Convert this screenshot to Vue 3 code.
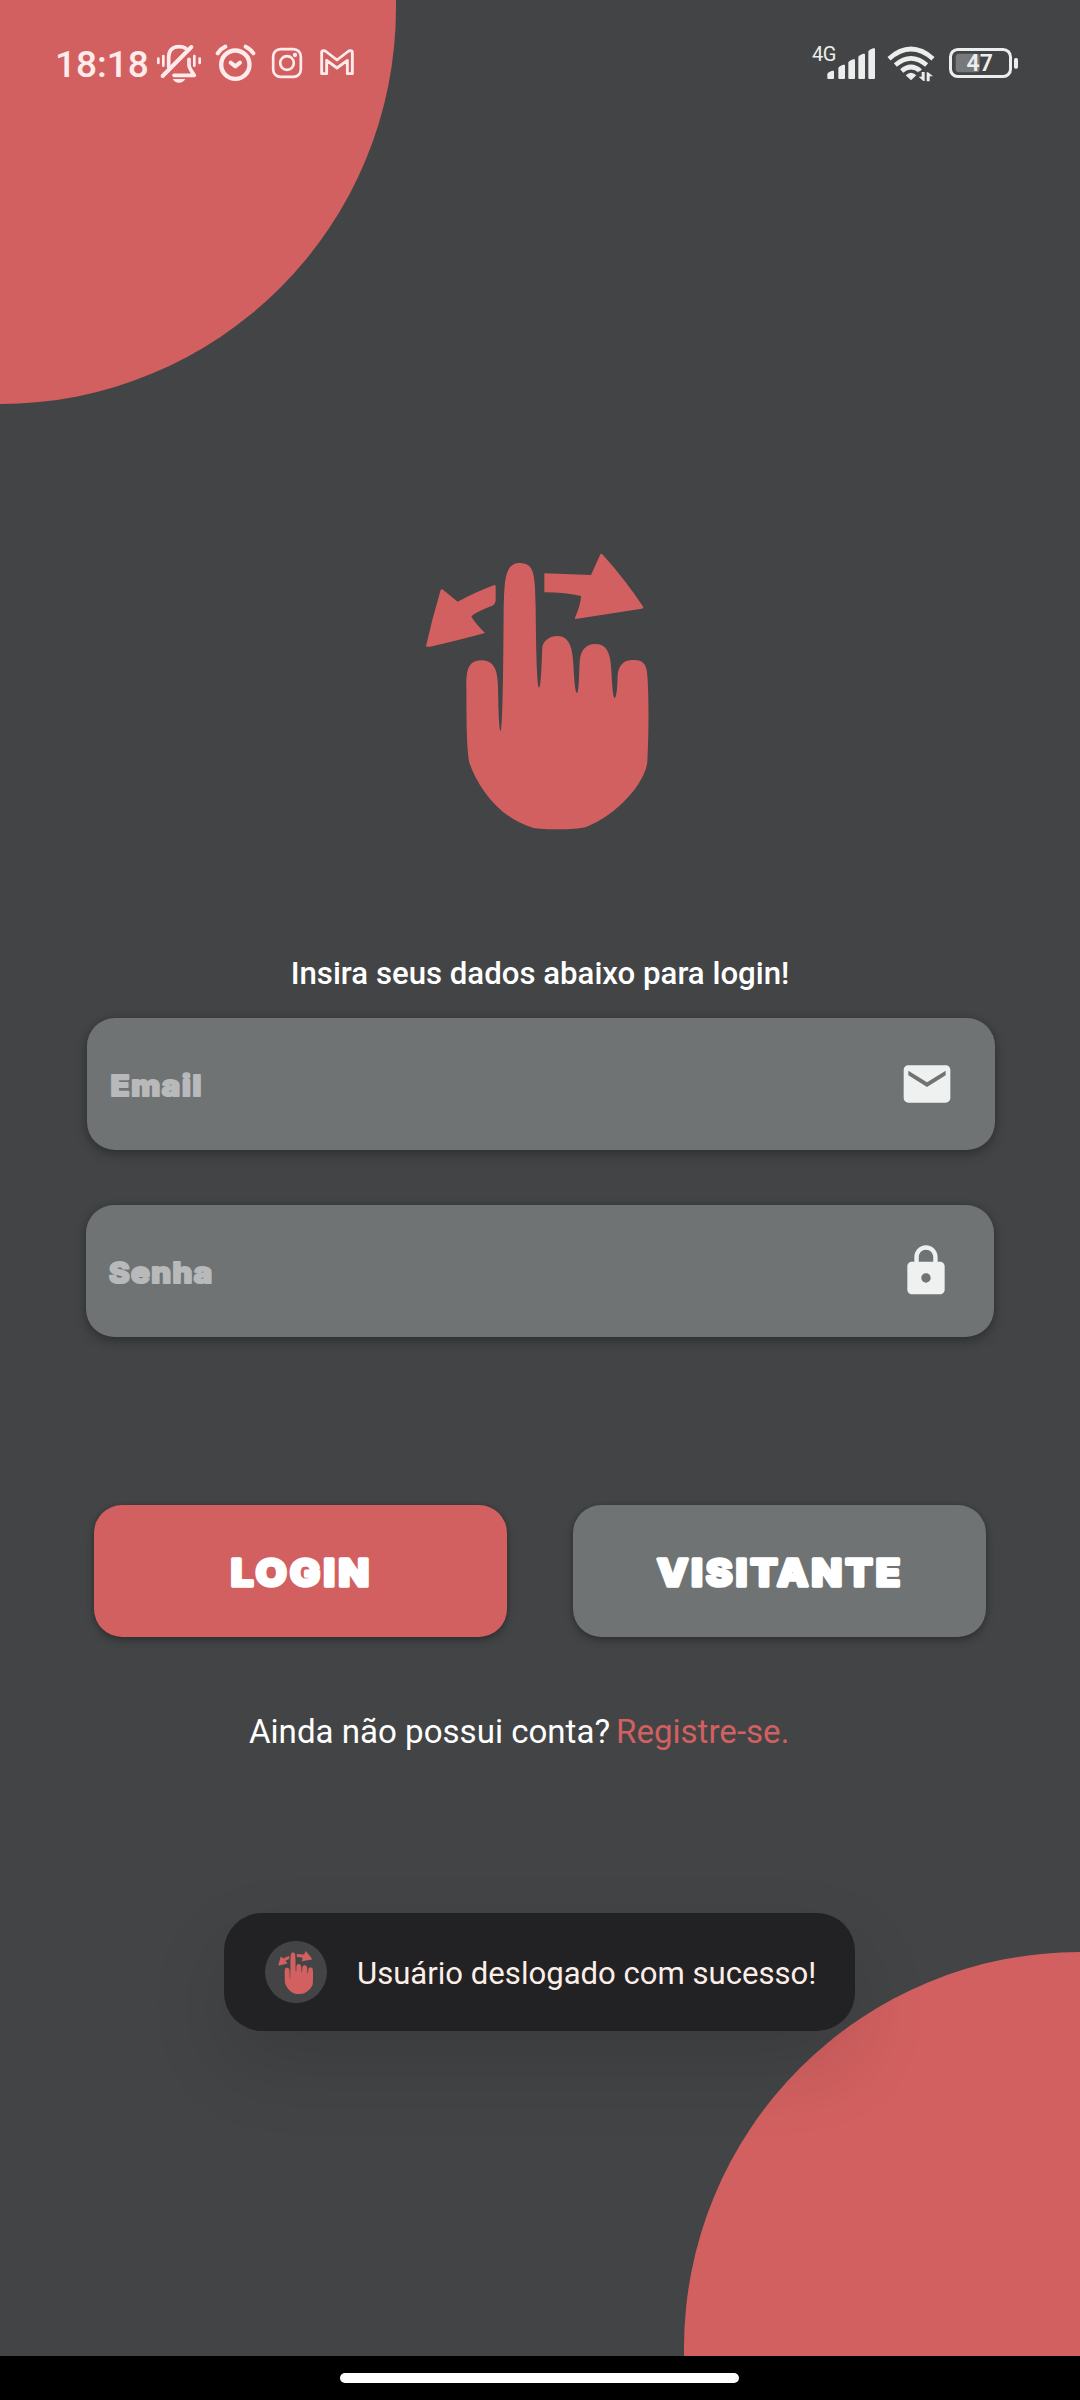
<script setup>
const hand =
  'M169 440C169 395 172 361 215 361C259 361 263 405 264 440C265 500 267 572 272 573C278 570 280 400 281 210C283 120 284 69 330 69C375 69 375 110 377 200C378 330 381 440 387 443C393 440 394 390 397 322C399 302 420 288 442 288C479 288 487 325 490 370C492 410 495 458 501 459C507 456 507 405 509 365C511 335 524 312 557 312C595 312 602 350 604 390C606 430 609 474 614 474C620 472 622 440 623 405C626 372 645 360 668 360C706 360 711 377 713 420C716 480 717 560 712 665C706 730 620 825 530 860C495 870 410 870 368 863C270 835 205 745 178 668C168 610 170 510 169 440Z'
const arrowLeft =
  'M48 319Q66 237 92 150Q95 146 99 149L143 185Q205 152 254 135Q257 135 257 140V182Q256 192 247 197C215 210 190 220 184 230Q198 252 225 279Q140 302 66 319Q52 322 48 319Z'
const arrowRight =
  'M403 100L543 105L571 43Q574 39 579 45Q645 118 700 201Q701 205 695 206L497 237Q493 237 495 233Q513 192 513 168Q470 158 403 157Z'
const bars = [
  [112, 122],
  [145, 104],
  [175, 88],
  [205, 71],
  [235, 55],
]
</script>

<template>
  <div class="screen">
    <div class="blob top"></div>
    <div class="blob bottom"></div>

    <header class="status">
      <span class="time">18:18</span>
      <svg class="bell" viewBox="351 42 135 117" width="45" height="39">
        <g fill="none" stroke="#ffebeb" stroke-linecap="round" stroke-linejoin="round">
          <path stroke-width="11" d="M386 110V82C386 59 400 50 417 50Q429 50 437 55M447 88V106Q447 114 463 136H402" />
          <path stroke-width="12" d="M368 138L454 51" />
          <path stroke-width="8" d="M355 86V99M370 78V107M463 78V107M479 86V99" />
        </g>
        <path fill="#ffebeb" d="M398 147H436Q430 158 417 158Q404 158 398 147Z" />
      </svg>
      <svg class="alarm" viewBox="525 42 123 117" width="41" height="39">
        <g fill="none" stroke="#ffebeb" stroke-linecap="round" stroke-linejoin="round">
          <circle cx="586" cy="104" r="42.5" stroke-width="13" />
          <path stroke-width="12" d="M533 70Q541 57 556 50M617 50Q633 58 640 70" />
          <path stroke-width="12" d="M572 98L586 109L600 98" />
        </g>
      </svg>
      <svg class="insta" viewBox="693 42 96 117" width="32" height="39">
        <g fill="none" stroke="#ffebeb" stroke-width="8">
          <rect x="699.5" y="57.5" width="83" height="83" rx="22" />
          <circle cx="741" cy="99" r="20.5" />
        </g>
        <circle cx="765" cy="75" r="6.5" fill="#ffebeb" />
      </svg>
      <svg class="gmail" viewBox="837 42 108 117" width="36" height="39">
        <path
          fill="none" stroke="#ffebeb" stroke-width="8.5" stroke-linejoin="round"
          d="M845 131V67Q845 62 851 62L856 63L891 90L926 63L931 62Q937 62 937 67V131H922V91L891 114L860 91V131Z"
        />
      </svg>

      <div class="signal">
        <span class="net">4G</span>
        <svg viewBox="111 42 147 117" width="49" height="39">
          <path
            v-for="[x, y] in bars" :key="x" fill="#eceeee"
            :d="`M${x} ${y + 9}Q${x + 2} ${y + 5} ${x + 14} ${y}H${x + 18}Q${x + 20} ${y} ${x + 20} ${y + 3}V144Q${x + 20} 147 ${x + 17} 147H${x + 3}Q${x} 147 ${x} 144Z`"
          />
        </svg>
      </div>
      <svg class="wifi" viewBox="291 42 144 117" width="48" height="39">
        <g fill="none" stroke="#eceeee" stroke-width="14">
          <path d="M297 86Q363 28 429 86" />
          <path d="M316 105Q363 65 410 105" />
          <path d="M335 123Q363 99 391 123" />
        </g>
        <path fill="#eceeee" d="M347 136Q363 121 379 136L363 151Z" />
        <path fill="#434445" d="M385 124H434V158H385Z" />
        <path fill="#eceeee" d="M395 126H404V153H400L386 140H395ZM410 154V127H414L429 139H419V154Z" />
      </svg>
      <div class="battery">
        <svg viewBox="474 42 213 117" width="71" height="39">
          <rect x="497" y="71" width="72" height="56" rx="10" fill="#78797b" />
          <rect x="481.5" y="58.5" width="180" height="81" rx="22" fill="none" stroke="#eceeee" stroke-width="9" />
          <rect x="672" y="84" width="12" height="32" rx="5" fill="#eceeee" />
        </svg>
        <span class="pct">47</span>
      </div>
    </header>

    <main class="body">
      <svg class="logo" viewBox="0 0 750 900" width="250" height="300" fill="#d26060">
        <path :d="hand" /><path :d="arrowLeft" /><path :d="arrowRight" />
      </svg>

      <p class="lead"><span>Insira seus dados abaixo para login!</span></p>

      <div class="field email">
        <svg class="display ph" width="110" height="40">
          <text transform="scale(1.08 1)" x="0.5" y="29.5" textLength="84">Email</text>
        </svg>
        <svg viewBox="0 0 24 24" width="56" height="56" fill="#eff1f1">
          <path d="M20 4H4c-1.1 0-1.99.9-1.99 2L2 18c0 1.1.9 2 2 2h16c1.1 0 2-.9 2-2V6c0-1.1-.9-2-2-2zm0 4.3l-8 5-8-5V6.3l8 5 8-5z" />
        </svg>
      </div>
      <div class="field senha">
        <svg class="display ph" width="120" height="40">
          <text transform="scale(1.08 1)" x="0" y="29.5" textLength="95.5">Senha</text>
        </svg>
        <svg viewBox="0 0 24 24" width="56" height="56" fill="#eff1f1">
          <path d="M18 8h-1V6c0-2.76-2.24-5-5-5S7 3.24 7 6v2H6c-1.1 0-2 .9-2 2v10c0 1.1.9 2 2 2h12c1.1 0 2-.9 2-2V10c0-1.1-.9-2-2-2zm-6 9c-1.1 0-2-.9-2-2s.9-2 2-2 2 .9 2 2-.9 2-2 2zM15.1 8H8.9V6c0-1.71 1.39-3.1 3.1-3.1s3.1 1.39 3.1 3.1z" />
        </svg>
      </div>

      <div class="actions">
        <button class="btn primary">
          <svg class="display" width="200" height="50">
            <text transform="scale(1.08 1)" x="91.6" y="40.5" text-anchor="middle" textLength="128">LOGIN</text>
          </svg>
        </button>
        <button class="btn">
          <svg class="display" width="280" height="50">
            <text transform="scale(1.08 1)" x="128.4" y="40.5" text-anchor="middle" textLength="225">VISITANTE</text>
          </svg>
        </button>
      </div>

      <p class="register"><span class="ask">Ainda não possui conta?</span><span class="link">Registre-se.</span></p>

      <div class="toast">
        <div class="avatar">
          <svg viewBox="48 40 669 828" width="35.5" height="43" fill="#d26060">
            <path :d="hand" /><path :d="arrowLeft" /><path :d="arrowRight" />
          </svg>
        </div>
        <span class="msg">Usuário deslogado com sucesso!</span>
      </div>
    </main>

    <footer class="nav"><div class="pill"></div></footer>
  </div>
</template>

<style>
html,
body {
  margin: 0;
  background: #434445;
}
</style>

<style scoped>
.screen {
  position: relative;
  width: 1080px;
  height: 2400px;
  overflow: hidden;
  background: #434445;
  font-family: Roboto, "Liberation Sans", sans-serif;
  display: flex;
  flex-direction: column;
}
.blob {
  position: absolute;
  width: 396px;
  height: 404px;
  background: #d26060;
}
.blob.top {
  left: 0;
  top: 0;
  border-bottom-right-radius: 396px;
}
.blob.bottom {
  right: 0;
  top: 1952px;
  border-top-left-radius: 396px;
}
.status {
  position: relative;
  height: 83px;
  padding: 44px 61px 0 55px;
  box-sizing: border-box;
  display: flex;
  align-items: flex-start;
}
.status svg {
  display: block;
  flex: none;
}
.time {
  width: 102px;
  font-size: 37px;
  line-height: 41px;
  font-weight: 500;
  color: #ffebeb;
  white-space: nowrap;
}
.alarm {
  margin-left: 13px;
}
.insta {
  margin-left: 15px;
}
.gmail {
  margin-left: 16px;
}
.signal {
  position: relative;
  margin-left: auto;
}
.net {
  position: absolute;
  left: -15px;
  top: -1px;
  font-size: 20px;
  line-height: 22px;
  letter-spacing: -0.5px;
  color: #eceeee;
}
.wifi {
  margin-left: 11px;
}
.battery {
  position: relative;
  margin-left: 13px;
}
.pct {
  position: absolute;
  left: 18.5px;
  top: 7px;
  font-size: 23px;
  line-height: 26px;
  font-weight: 600;
  color: #eceeee;
}
.body {
  position: relative;
  flex: 1;
  display: flex;
  flex-direction: column;
}
.logo {
  display: block;
  margin: 457px 0 0 410px;
}
p {
  margin: 0;
  white-space: nowrap;
}
.lead {
  margin-top: 114px;
  height: 40px;
  line-height: 40px;
  text-align: center;
  font-size: 31.2px;
  font-weight: 500;
  color: #fff;
}
.field {
  width: 908px;
  height: 132px;
  box-sizing: border-box;
  padding: 0 40px 0 23px;
  border-radius: 28px;
  background: #6f7374;
  box-shadow: 0 5px 12px rgba(0, 0, 0, 0.25), 0 0 6px rgba(0, 0, 0, 0.12);
  display: flex;
  align-items: center;
  justify-content: space-between;
}
.email {
  margin: 24px 0 0 87px;
}
.senha {
  margin: 55px 0 0 86px;
}
.display {
  display: block;
  flex: none;
  overflow: visible;
  font-family: Inter, "Open Sans", sans-serif;
  font-weight: 800;
  font-size: 37px;
  fill: #fff;
  stroke: #fff;
  stroke-width: 3.6px;
  stroke-linejoin: round;
  stroke-linecap: round;
}
.ph {
  margin-top: 5px;
  font-size: 29px;
  fill: #b7b9ba;
  stroke: #b7b9ba;
  stroke-width: 2.2px;
}
.actions {
  display: flex;
  gap: 66px;
  margin: 168px 0 0 94px;
}
.btn {
  width: 413px;
  height: 132px;
  padding: 0;
  border: 0;
  border-radius: 28px;
  background: #6f7374;
  box-shadow: 0 4px 8px rgba(0, 0, 0, 0.26), 0 0 4px rgba(0, 0, 0, 0.13);
  display: flex;
  align-items: center;
  justify-content: center;
}
.primary {
  background: #d26060;
}
.register {
  display: flex;
  margin: 75px 0 0 249px;
  height: 40px;
  line-height: 40px;
  font-size: 33.1px;
  color: #fff;
}
.ask {
  width: 367px;
}
.link {
  color: #d26060;
}
.toast {
  width: 631px;
  height: 118px;
  box-sizing: border-box;
  margin: 161px 0 0 224px;
  padding-left: 41px;
  border-radius: 38px;
  background: #222224;
  box-shadow: 0 34px 80px rgba(0, 0, 0, 0.12);
  display: flex;
  align-items: center;
}
.avatar {
  width: 62px;
  height: 62px;
  flex: none;
  border-radius: 50%;
  background: #434445;
  display: flex;
  align-items: center;
  justify-content: center;
}
.msg {
  margin: 3px 0 0 30px;
  font-size: 31.1px;
  line-height: 36px;
  white-space: nowrap;
  color: #fdeee8;
}
.nav {
  position: relative;
  height: 44px;
  flex: none;
  background: #000;
  display: flex;
  align-items: center;
  justify-content: center;
}
.pill {
  width: 399px;
  height: 10px;
  margin-right: 2px;
  border-radius: 5px;
  background: #fff;
}
</style>
